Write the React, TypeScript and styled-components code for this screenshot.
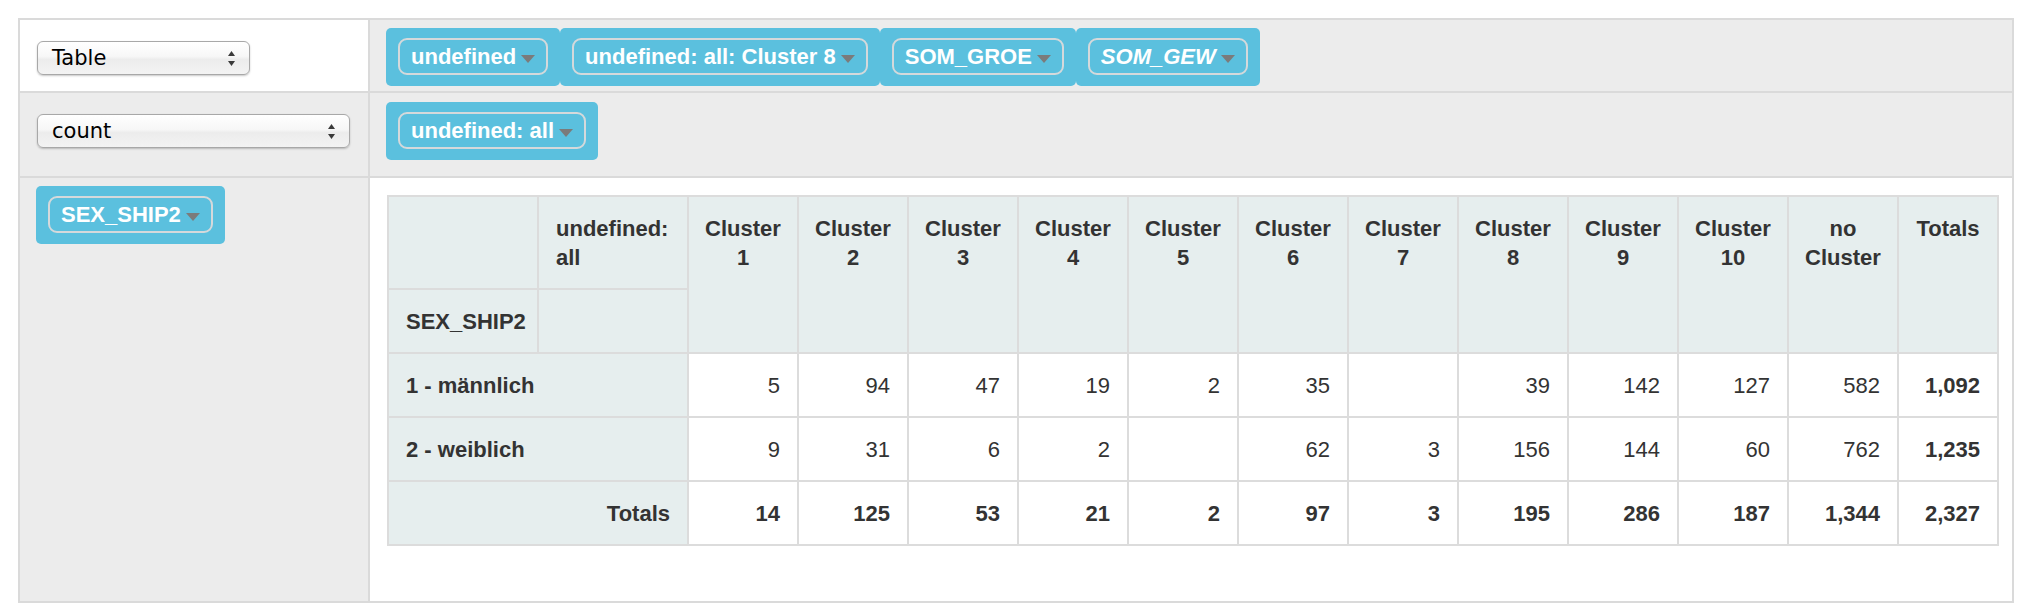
import React from 'react';
import styled, { createGlobalStyle } from 'styled-components';

const GlobalStyle = createGlobalStyle`
  html, body { margin: 0; padding: 0; background: #ffffff; }
  body { font-family: "Liberation Sans", Arial, sans-serif; }
  * { box-sizing: border-box; }
`;

const Page = styled.div`
  padding: 18px;
  width: 2034px;
`;

const Frame = styled.div`
  display: grid;
  grid-template-columns: 348px 1fr;
  grid-template-rows: 71px 83px 423px;
  gap: 2px;
  padding: 2px;
  background: #dadada;
  width: 1996px;
`;

const Cell = styled.div<{ $bg: 'white' | 'gray'; $pad: string }>`
  background: ${(p) => (p.$bg === 'white' ? '#ffffff' : '#ececec')};
  padding: ${(p) => p.$pad};
  min-width: 0;
`;

const SelectBox = styled.div<{ $w: number }>`
  width: ${(p) => p.$w}px;
  height: 34px;
  display: flex;
  align-items: center;
  justify-content: space-between;
  padding: 0 14px 0 14px;
  border: 1px solid #a8a8a8;
  border-radius: 6px;
  background: linear-gradient(#ffffff 0%, #f7f7f7 45%, #ececec 55%, #f3f3f3 100%);
  box-shadow: 0 1px 2px rgba(0, 0, 0, 0.22);
  font-family: "DejaVu Sans", "Liberation Sans", sans-serif;
  font-size: 21px;
  color: #000000;
  cursor: default;
`;

const ChipList = styled.div`
  display: flex;
  flex-wrap: wrap;
  align-items: flex-start;
`;

const Chip = styled.div`
  display: flex;
  background: #5bc0de;
  border-radius: 5px;
  padding: 10px 12px 11px;
`;

const Pill = styled.span<{ $italic?: boolean }>`
  display: inline-flex;
  align-items: center;
  border: 2px solid #d5d9db;
  border-radius: 9px;
  padding: 4px 11px;
  line-height: 25px;
  font-size: 22px;
  font-weight: bold;
  font-style: ${(p) => (p.$italic ? 'italic' : 'normal')};
  color: #ffffff;
  white-space: nowrap;
`;

const Caret = styled.span`
  width: 0;
  height: 0;
  border-left: 7px solid transparent;
  border-right: 7px solid transparent;
  border-top: 8px solid #7b7b7b;
  margin-left: 5px;
  margin-top: 5px;
`;

const Pivot = styled.table`
  border-collapse: collapse;
  table-layout: fixed;
  width: 1610px;
  font-size: 22px;
  line-height: 29px;
  color: #333333;
`;

const Col = styled.col<{ $w: number }>`
  width: ${(p) => p.$w}px;
`;

const HeadCell = styled.th<{ $align?: 'left' | 'center' | 'right'; $narrow?: boolean }>`
  background: #e6eeee;
  border: 2px solid #dcdcdc;
  padding: ${(p) => (p.$narrow ? '17px 12px 16px' : '17px 17px 16px')};
  font-weight: bold;
  text-align: ${(p) => p.$align || 'left'};
  vertical-align: top;
`;

const DataCell = styled.td<{ $bold?: boolean }>`
  background: #ffffff;
  border: 2px solid #dcdcdc;
  padding: 17px 17px 16px;
  text-align: right;
  vertical-align: top;
  font-weight: ${(p) => (p.$bold ? 'bold' : 'normal')};
`;

const Arrows = () => (
  <svg width="7" height="15" viewBox="0 0 7 15">
    <polygon points="0,5 3.5,0 7,5" fill="#3a3a3a" />
    <polygon points="0,10 7,10 3.5,15" fill="#3a3a3a" />
  </svg>
);

const Select = ({ label, width }: { label: string; width: number }) => (
  <SelectBox $w={width}>
    <span>{label}</span>
    <Arrows />
  </SelectBox>
);

const Attr = ({ name, italic }: { name: string; italic?: boolean }) => (
  <Chip>
    <Pill $italic={italic}>
      {name}
      <Caret />
    </Pill>
  </Chip>
);

const colLabels = [
  'Cluster 1',
  'Cluster 2',
  'Cluster 3',
  'Cluster 4',
  'Cluster 5',
  'Cluster 6',
  'Cluster 7',
  'Cluster 8',
  'Cluster 9',
  'Cluster 10',
  'no Cluster',
];

const rows: { label: string; values: string[]; total: string }[] = [
  {
    label: '1 - männlich',
    values: ['5', '94', '47', '19', '2', '35', '', '39', '142', '127', '582'],
    total: '1,092',
  },
  {
    label: '2 - weiblich',
    values: ['9', '31', '6', '2', '', '62', '3', '156', '144', '60', '762'],
    total: '1,235',
  },
];

const colTotals = ['14', '125', '53', '21', '2', '97', '3', '195', '286', '187', '1,344'];

export default function App() {
  return (
    <Page>
      <GlobalStyle />
      <Frame>
        <Cell $bg="white" $pad="21px 0 0 17px">
          <Select label="Table" width={213} />
        </Cell>
        <Cell $bg="gray" $pad="8px 16px">
          <ChipList>
            <Attr name="undefined" />
            <Attr name="undefined: all: Cluster 8" />
            <Attr name="SOM_GROE" />
            <Attr name="SOM_GEW" italic />
          </ChipList>
        </Cell>
        <Cell $bg="gray" $pad="21px 0 0 17px">
          <Select label="count" width={313} />
        </Cell>
        <Cell $bg="gray" $pad="9px 16px">
          <ChipList>
            <Attr name="undefined: all" />
          </ChipList>
        </Cell>
        <Cell $bg="gray" $pad="8px 16px">
          <ChipList>
            <Attr name="SEX_SHIP2" />
          </ChipList>
        </Cell>
        <Cell $bg="white" $pad="17px">
          <Pivot>
            <colgroup>
              <Col $w={150} />
              <Col $w={150} />
              {colLabels.map((c) => (
                <Col key={c} $w={110} />
              ))}
              <Col $w={100} />
            </colgroup>
            <thead>
              <tr>
                <HeadCell />
                <HeadCell>undefined: all</HeadCell>
                {colLabels.map((c) => (
                  <HeadCell key={c} rowSpan={2} $align="center" $narrow>
                    {c}
                  </HeadCell>
                ))}
                <HeadCell rowSpan={2} $align="center" $narrow>
                  Totals
                </HeadCell>
              </tr>
              <tr>
                <HeadCell>SEX_SHIP2</HeadCell>
                <HeadCell />
              </tr>
            </thead>
            <tbody>
              {rows.map((r) => (
                <tr key={r.label}>
                  <HeadCell colSpan={2}>{r.label}</HeadCell>
                  {r.values.map((v, i) => (
                    <DataCell key={i}>{v}</DataCell>
                  ))}
                  <DataCell $bold>{r.total}</DataCell>
                </tr>
              ))}
              <tr>
                <HeadCell colSpan={2} $align="right">
                  Totals
                </HeadCell>
                {colTotals.map((v, i) => (
                  <DataCell key={i} $bold>
                    {v}
                  </DataCell>
                ))}
                <DataCell $bold>2,327</DataCell>
              </tr>
            </tbody>
          </Pivot>
        </Cell>
      </Frame>
    </Page>
  );
}
